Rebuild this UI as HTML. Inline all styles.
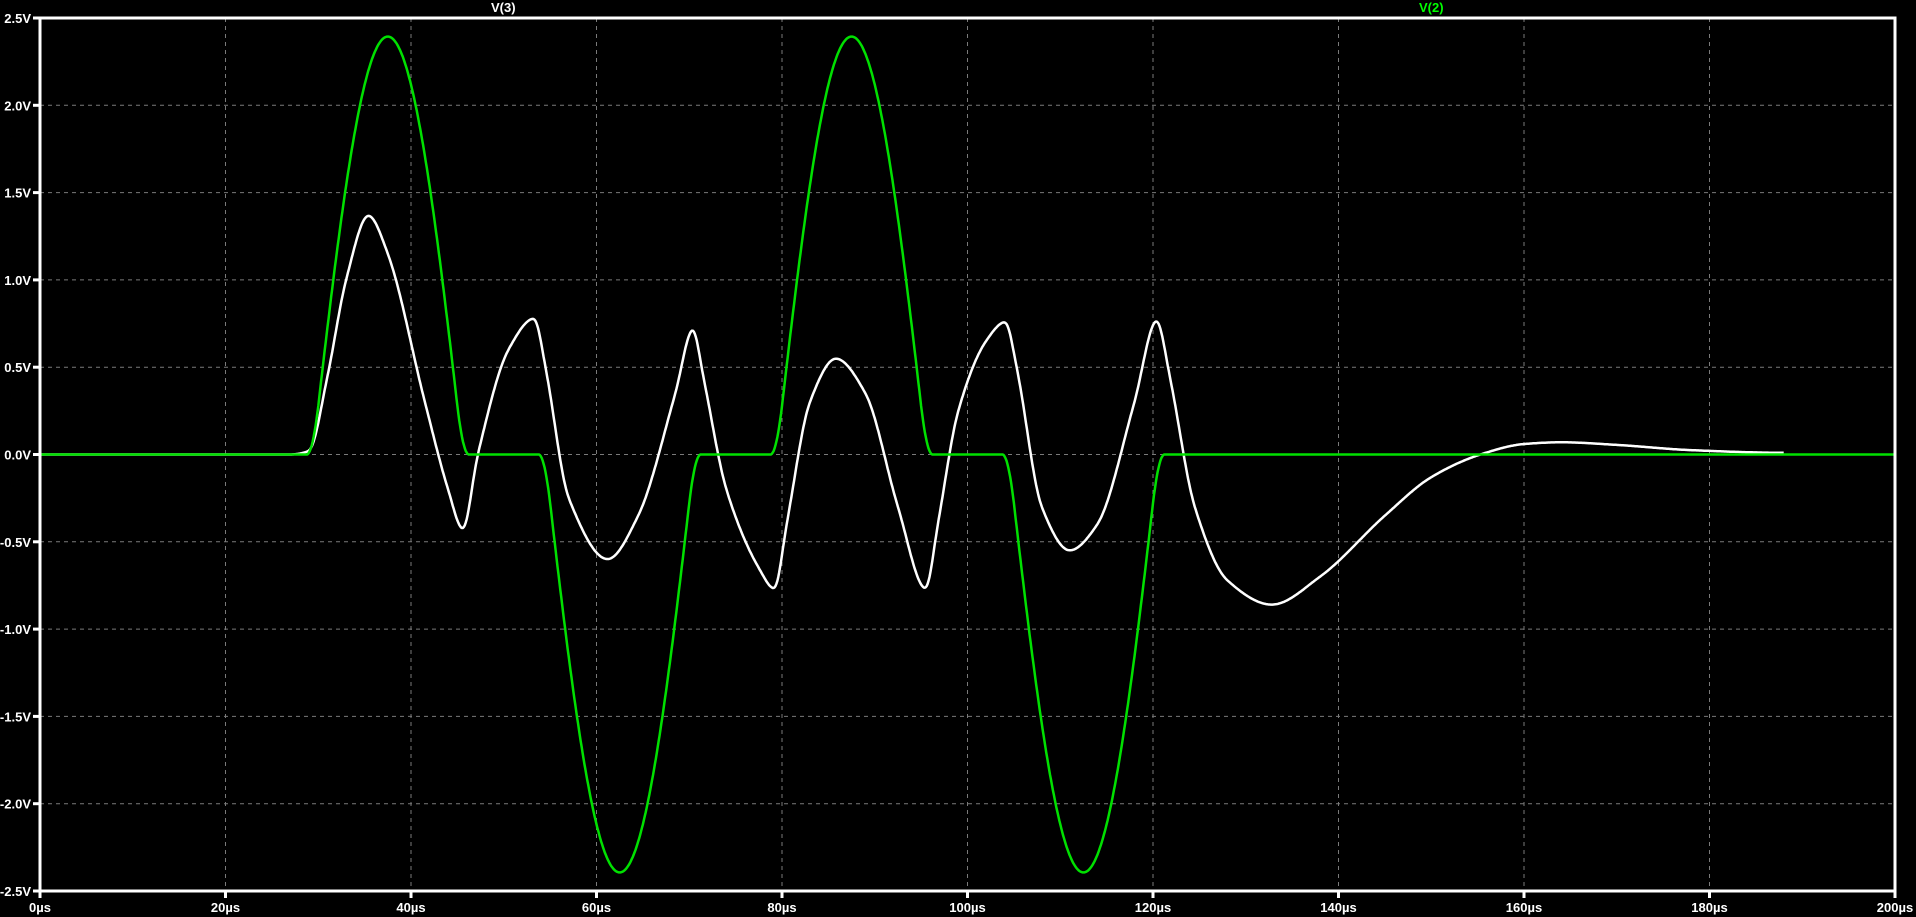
<!DOCTYPE html>
<html><head><meta charset="utf-8"><style>
html,body{margin:0;padding:0;background:#000;width:1916px;height:917px;overflow:hidden}
text{font-family:"Liberation Sans","DejaVu Sans",sans-serif;font-size:13px;font-weight:bold;fill:#fff}
</style></head><body>
<svg id="s" width="1916" height="917" xmlns="http://www.w3.org/2000/svg">
<g id="grid" stroke="#7a7a7a" stroke-width="1" stroke-dasharray="4,4"></g>
<g id="lbl"></g>
<text x="491" y="12">V(3)</text>
<text x="1419" y="12" style="fill:#00ff00">V(2)</text>
<path id="w" fill="none" stroke="#fff" stroke-width="2.5"/>
<path id="g" fill="none" stroke="#00e000" stroke-width="2.5"/>
<rect x="40" y="18" width="1855" height="873" fill="none" stroke="#fff" stroke-width="3"/>
</svg>
<script>
var X=t=>40+t*9.275, Y=v=>454.5-v*174.6;
var G=document.getElementById('grid'),L=document.getElementById('lbl'),ns='http://www.w3.org/2000/svg';
function el(p,tag,a,txt){var e=document.createElementNS(ns,tag);for(var k in a)e.setAttribute(k,a[k]);if(txt)e.textContent=txt;p.appendChild(e);}
for(var i=0;i<=10;i++){var v=2.5-i*0.5,y=Y(v);
 if(i>0&&i<10)el(G,'line',{x1:40,x2:1895,y1:y,y2:y});
 el(L,'line',{x1:33,x2:40,y1:y,y2:y,stroke:'#fff','stroke-width':3});
 el(L,'text',{x:31,y:y+5,'text-anchor':'end'},v.toFixed(1)+'V');}
for(var i=0;i<=10;i++){var x=X(i*20);
 if(i>0&&i<10)el(G,'line',{x1:x,x2:x,y1:18,y2:891});
 el(L,'line',{x1:x,x2:x,y1:891,y2:898,stroke:'#fff','stroke-width':3});
 el(L,'text',{x:x,y:912,'text-anchor':'middle'},(i*20)+'µs');}
var dt=0.1;
function smooth(a,r){var o=[];for(var i=0;i<a.length;i++){var s=0,n=0;for(var j=-r;j<=r;j++){var k=i+j;if(k>=0&&k<a.length){s+=a[k];n++;}}o.push(s/n);}return o;}
function path(arr,t0){var d='';for(var i=0;i<arr.length;i++){d+=(i?'L':'M')+X(t0+i*dt).toFixed(1)+','+Y(arr[i]).toFixed(1);}return d;}
// green
var ga=[];for(var t=0;t<=200.001;t+=dt){var v=0;[[37.5,1],[62.5,-1],[87.5,1],[112.5,-1]].forEach(function(c){var u=(t-c[0])/8.1;if(Math.abs(u)<1)v+=c[1]*2.4*Math.cos(u*Math.PI/2);});ga.push(v);}
document.getElementById('g').setAttribute('d',path(smooth(ga,6),0));
// white
var P=[[0,0],[27,0],[29,0.02],[31,0.45],[33,1.0],[35.4,1.37],[37.5,1.15],[41.5,0.3],[44,-0.2],[45.6,-0.43],[47.2,0],[50.5,0.6],[53.3,0.78],[54.5,0.5],[57,-0.25],[61.2,-0.6],[64.5,-0.35],[68.5,0.35],[70.4,0.72],[71.5,0.45],[74,-0.2],[77.5,-0.65],[79.2,-0.77],[80.5,-0.4],[83,0.3],[85.8,0.55],[89,0.35],[92.5,-0.3],[95.5,-0.77],[96.8,-0.4],[99,0.25],[102,0.65],[104.1,0.76],[105.3,0.5],[108,-0.3],[111,-0.55],[114,-0.4],[118,0.3],[120.4,0.77],[121.8,0.45],[124.5,-0.3],[128,-0.72],[132.8,-0.86],[138,-0.7],[145,-0.35],[150,-0.13],[155.3,0],[160,0.06],[164,0.07],[170,0.055],[178,0.025],[188,0.01]];
var m=P.map(function(p,i){var a=P[i-1]||p,b=P[i+1]||p;if(a===b)return 0;
 if(a!==p&&b!==p){var s1=(p[1]-a[1])/(p[0]-a[0]),s2=(b[1]-p[1])/(b[0]-p[0]);if(s1*s2<=0)return 0;return 2/(1/s1+1/s2);}return 0;});
function wv(t){for(var i=0;i<P.length-1;i++){if(t<=P[i+1][0]){var h=P[i+1][0]-P[i][0],s=(t-P[i][0])/h,s2=s*s,s3=s2*s;
 return (2*s3-3*s2+1)*P[i][1]+(s3-2*s2+s)*h*m[i]+(-2*s3+3*s2)*P[i+1][1]+(s3-s2)*h*m[i+1];}}return P[P.length-1][1];}
var wa=[];for(var t=0;t<=188.001;t+=dt)wa.push(wv(t));
document.getElementById('w').setAttribute('d',path(smooth(wa,3),0));
</script>
</body></html>
